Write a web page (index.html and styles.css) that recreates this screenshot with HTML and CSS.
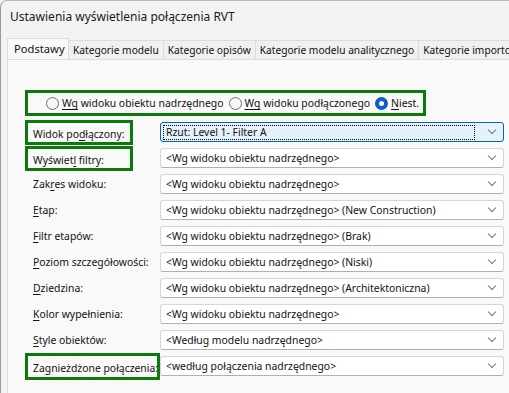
FILE: index.html
```html
<!DOCTYPE html>
<html lang="pl">
<head>
  <meta charset="UTF-8" />
  <title>Ustawienia wyświetlenia połączenia RVT</title>
  <link rel="stylesheet" href="styles.css">
</head>
<body>
  <div class="window">
    <div class="titlebar">Ustawienia wyświetlenia połączenia RVT</div>

    <div class="tabs">
      <div class="tab active">Podstawy</div>
      <div class="tab">Kategorie modelu</div>
      <div class="tab">Kategorie opisów</div>
      <div class="tab">Kategorie modelu analitycznego</div>
      <div class="tab">Kategorie importowanych</div>
    </div>

    <div class="panel">
      <div class="radios hl">
        <label class="radio"><span class="dot"></span><span><u>Wg</u> widoku obiektu nadrzędnego</span></label>
        <label class="radio"><span class="dot"></span><span><u>Wg</u> widoku podłączonego</span></label>
        <label class="radio"><span class="dot on"></span><span><u>N</u>iest.</span></label>
      </div>

      <div class="rows">
        <div class="row">
          <span class="lbl hl">Widok po<u>d</u>łączony:</span>
          <div class="combo focus"><span class="val">Rzut: Level 1- Filter A</span><span class="chev"></span></div>
        </div>
        <div class="row">
          <span class="lbl hl">Wyświet<u>l</u> filtry:</span>
          <div class="combo"><span class="val">&lt;Wg widoku obiektu nadrzędnego&gt;</span><span class="chev"></span></div>
        </div>
        <div class="row">
          <span class="lbl">Zak<u>r</u>es widoku:</span>
          <div class="combo"><span class="val">&lt;Wg widoku obiektu nadrzędnego&gt;</span><span class="chev"></span></div>
        </div>
        <div class="row">
          <span class="lbl"><u>E</u>tap:</span>
          <div class="combo"><span class="val">&lt;Wg widoku obiektu nadrzędnego&gt; (New Construction)</span><span class="chev"></span></div>
        </div>
        <div class="row">
          <span class="lbl"><u>F</u>iltr etapów:</span>
          <div class="combo"><span class="val">&lt;Wg widoku obiektu nadrzędnego&gt; (Brak)</span><span class="chev"></span></div>
        </div>
        <div class="row">
          <span class="lbl"><u>P</u>oziom szczegółowości:</span>
          <div class="combo"><span class="val">&lt;Wg widoku obiektu nadrzędnego&gt; (Niski)</span><span class="chev"></span></div>
        </div>
        <div class="row">
          <span class="lbl"><u>D</u>ziedzina:</span>
          <div class="combo"><span class="val">&lt;Wg widoku obiektu nadrzędnego&gt; (Architektoniczna)</span><span class="chev"></span></div>
        </div>
        <div class="row">
          <span class="lbl"><u>K</u>olor wypełnienia:</span>
          <div class="combo"><span class="val">&lt;Wg widoku obiektu nadrzędnego&gt;</span><span class="chev"></span></div>
        </div>
        <div class="row">
          <span class="lbl"><u>S</u>tyle obiektów:</span>
          <div class="combo"><span class="val">&lt;Według modelu nadrzędnego&gt;</span><span class="chev"></span></div>
        </div>
        <div class="row">
          <span class="lbl hl wide">Za<u>g</u>nieżdżone połączenia:</span>
          <div class="combo"><span class="val">&lt;według połączenia nadrzędnego&gt;</span><span class="chev"></span></div>
        </div>
      </div>
    </div>
  </div>
</body>
</html>
```

FILE: styles.css
```css
* { box-sizing: border-box; }
html, body { margin: 0; height: 100%; overflow: hidden; }
body { font-family: "Noto Sans", "Open Sans", sans-serif; font-size: 10.4px; color: #111; background: #f3f3f3; white-space: nowrap; }
u { text-decoration-thickness: 1px; text-underline-offset: 2px; }

.window { display: flex; flex-direction: column; height: 100%; border-left: 1px solid #9a9a9a; border-top: 1px solid #b8b8b8; border-top-left-radius: 7px; background: #f3f3f3; }
.titlebar { height: 29px; padding: 7px 0 0 9px; font-size: 12px; color: #1a1a1a; }

.tabs { display: flex; align-items: flex-end; margin-top: 8px; padding-left: 6px; height: 21px; overflow: hidden; }
.tab { flex: none; height: 19px; padding: 2px 4px 0; border: 1px solid #dcdcdc; border-bottom: none; border-left: none; background: #f0f0f0; font-size: 10.2px; }
.tab.active { width: 62px; height: 21px; padding: 2px 0 0 6px; border-left: 1px solid #dcdcdc; background: #f9f9f9; font-size: 11.2px; }

.panel { flex: 1; margin-left: 6px; padding: 30px 0 0 17px; background: #f9f9f9; border: 1px solid #dcdcdc; border-right: none; border-bottom: none; }

.hl { border: 3px solid #0b7a0b; }

.radios { display: flex; align-items: center; gap: 5px; width: 401px; height: 26px; padding-left: 18px; }
.radio { display: flex; align-items: center; gap: 3px; }
.dot { width: 13px; height: 13px; border: 1px solid #6e6e6e; border-radius: 50%; background: #f6f6f6; }
.dot.on { border: 4px solid #0a5fc4; background: #fff; }

.rows { display: flex; flex-direction: column; margin-top: 3px; }
.row { display: flex; align-items: center; height: 26px; }
.lbl { width: 135px; padding-left: 8px; }
.lbl.hl { width: 108px; height: 25px; margin-right: 27px; padding: 4px 0 0 5px; }
.lbl.hl.wide { width: 135px; height: 27px; margin-right: 0; padding-top: 5px; }

.combo { display: flex; align-items: center; justify-content: space-between; width: 344px; height: 20px; padding: 0 8px 0 5px; background: #fff; border: 1px solid #d6d6d6; border-bottom-color: #b0b0b0; border-radius: 3px; }
.combo.focus { background: #e5f1fb; border-color: #0067c0; padding-left: 2px; }
.combo.focus .val { flex: 1; margin-right: 14px; padding: 0 2px; height: 15px; line-height: 13px; border: 1px dotted #000; }
.chev { width: 6px; height: 6px; margin-top: -4px; border-right: 1px solid #777; border-bottom: 1px solid #777; transform: rotate(45deg); }
```
